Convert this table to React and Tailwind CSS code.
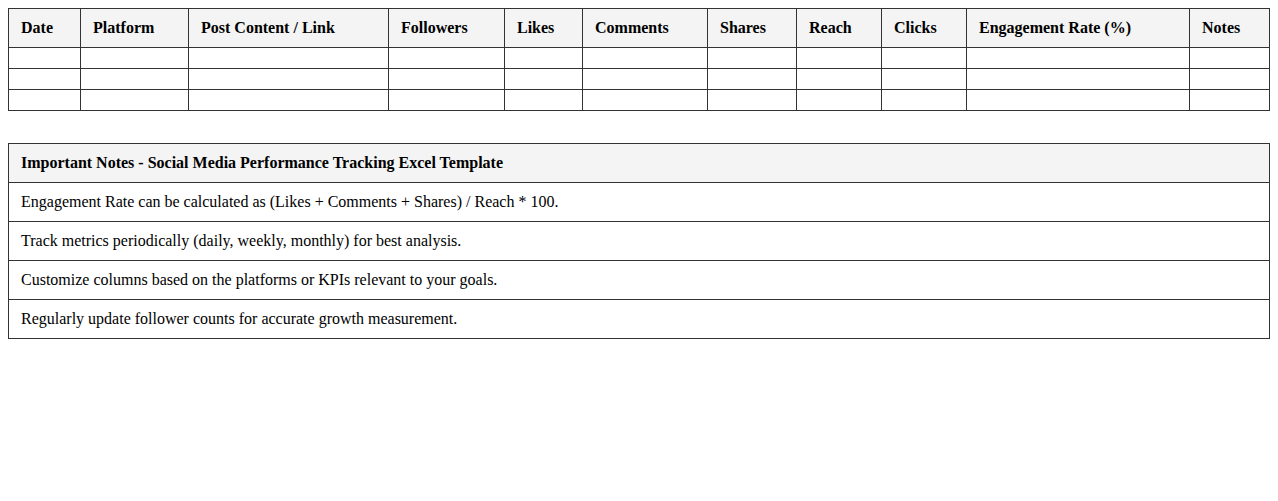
import React from "react";

const columns = [
  { label: "Date", w: "w-[72px]" },
  { label: "Platform", w: "w-[108px]" },
  { label: "Post Content / Link", w: "w-[200px]" },
  { label: "Followers", w: "w-[116px]" },
  { label: "Likes", w: "w-[78px]" },
  { label: "Comments", w: "w-[125px]" },
  { label: "Shares", w: "w-[89px]" },
  { label: "Reach", w: "w-[85px]" },
  { label: "Clicks", w: "w-[85px]" },
  { label: "Engagement Rate (%)", w: "w-[223px]" },
  { label: "Notes", w: "w-[80px]" },
];

const notes = [
  "Engagement Rate can be calculated as (Likes + Comments + Shares) / Reach * 100.",
  "Track metrics periodically (daily, weekly, monthly) for best analysis.",
  "Customize columns based on the platforms or KPIs relevant to your goals.",
  "Regularly update follower counts for accurate growth measurement.",
];

const App = () => {
  return (
    <div className="bg-white min-h-[501px] p-2 text-black text-[16px] leading-[18px] font-['Liberation_Serif','Times_New_Roman',serif]">
      {/* Tracking table */}
      <table className="w-full table-fixed border-collapse">
        <colgroup>
          {columns.map((c) => (
            <col key={c.label} className={c.w} />
          ))}
        </colgroup>
        <thead>
          <tr>
            {columns.map((c) => (
              <th
                key={c.label}
                className="border border-[#333] bg-[#f4f4f4] px-3 py-[10px] text-left font-bold"
              >
                {c.label}
              </th>
            ))}
          </tr>
        </thead>
        <tbody>
          {[0, 1, 2].map((r) => (
            <tr key={r}>
              {columns.map((c) => (
                <td key={c.label} className="border border-[#333] px-3 py-[10px] h-[21px]"></td>
              ))}
            </tr>
          ))}
        </tbody>
      </table>

      {/* Notes table */}
      <table className="w-full border-collapse mt-[32px]">
        <thead>
          <tr>
            <th className="border border-[#333] bg-[#f4f4f4] px-3 py-[10px] text-left font-bold">
              Important Notes - Social Media Performance Tracking Excel Template
            </th>
          </tr>
        </thead>
        <tbody>
          {notes.map((n) => (
            <tr key={n}>
              <td className="border border-[#333] px-3 py-[10px]">{n}</td>
            </tr>
          ))}
        </tbody>
      </table>
    </div>
  );
};

export default App;
